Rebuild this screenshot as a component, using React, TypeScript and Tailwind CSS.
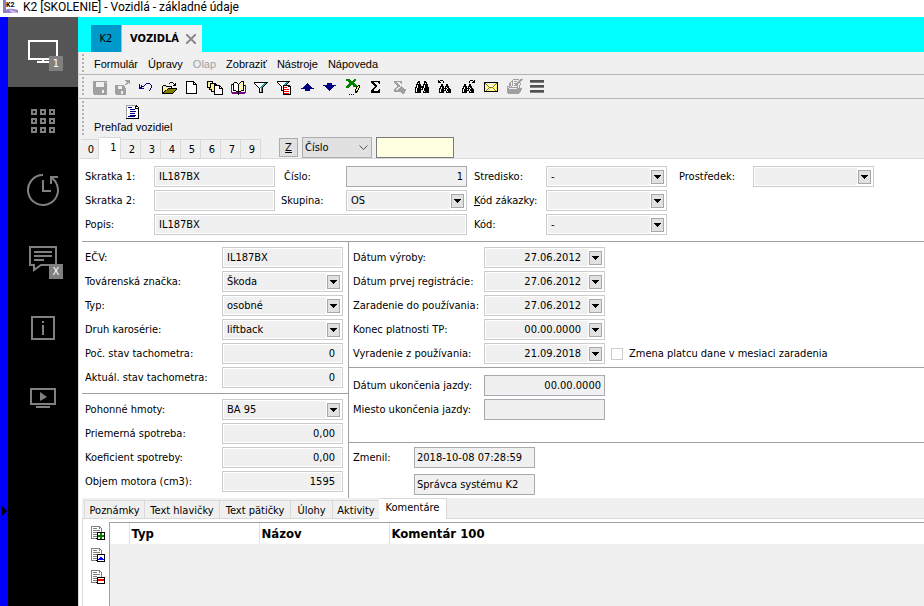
import { useState, type ReactNode } from 'react';
import clsx from 'clsx';

const PALETTE: Record<string, string> = {
  k: '#000000',
  g: '#a0a0a0',
  d: '#505050',
  s: '#808080',
  n: '#000080',
  b: '#0000ff',
  y: '#fff27a',
  o: '#808000',
  w: '#ffffff',
  t: '#2fa3a3',
  p: '#800080',
  r: '#ff0000',
  G: '#008000',
};

// Icons are stored as rows of palette letters, first row drawn at `top`
type Bitmap = { top: number; rows: string[] };

const ICONS: Record<string, Bitmap> = {
  save: {
    top: 2,
    rows: [
      '.gggggggggggggg', '.ggg........g.g', '.ggg........ggg', '.ggg........ggg', '.ggg........ggg',
      '.ggg........ggg', '.gggggggggggggg', '.gggggggggggggg', '.gggggggggggggg', '.ggggggggg..ggg',
      '.ggggggggg..ggg', '.ggggggggg..ggg', '.gggggggggggggg', '..ggggggggggggg',
    ],
  },
  saveAs: {
    top: 1,
    rows: [
      '..........ggggg', '...........gggg', '............ggg', '...........gg.g', '..........gg', 'ggggggggg',
      'ggg....ggg', 'ggg....ggg..', 'ggg....gggg', 'ggggggggggg', 'ggggggggggg', 'gggggg..ggg', 'gggggg..ggg',
      'gggggg..ggg', '.gggggggggg',
    ],
  },
  undo: {
    top: 4,
    rows: ['........nnnn', '.n.....n....n', '.n.n..n......n', '.n.nnn.......n', '.nnn.........n', '.nnnnn......n', '............n', '...........n'],
  },
  open: {
    top: 3,
    rows: [
      '.........kkk', '........k...k.k', '.............kk', '..kkk.......kkk', '.kyyykkkkkk', '.kywywywywk',
      '.kyywyykkkkkkkkk', '.kywyykooooooook', '.kyykoooooooook', '.kykoooooooook', '.kkoooooooook', '.kkkkkkkkkkk',
    ],
  },
  blank: {
    top: 2,
    rows: [
      '..kkkkkkkk', '..kwwwwwwkk', '..kwwwwwwkwk', '..kwwwwwwkkkk', '..kwwwwwwwwwk', '..kwwwwwwwwwk', '..kwwwwwwwwwk',
      '..kwwwwwwwwwk', '..kwwwwwwwwwk', '..kwwwwwwwwwk', '..kwwwwwwwwwk', '..kwwwwwwwwwk', '..kkkkkkkkkkk',
    ],
  },
  copies: {
    top: 2,
    rows: [
      'kkkkkk', 'kyywyk', 'kywkkkkkk', 'kyykyywkkk', 'kwykywykkkkkk', 'kyykyyykwwwwkk', 'kkkkwyykwwwwkwk',
      '..kyyyykwwwwkkkk', '..kkkyykwwwwwwwk', '....kwykwwwwwwwk', '....kkkkwwwwwwwk', '.......kwwwwwwwk',
      '.......kwwwwwwwk', '.......kkkkkkkkk',
    ],
  },
  book: {
    top: 2,
    rows: [
      '...........kkk', '....kkk...kwyk', '...kwwwk.kwywk', '.pkkwwwwkwywyk', '.pwkwwwwkywywkkp', '.pwkwwwwkwywykwp',
      '.pwkwwwwkywywkwp', '.pwkwwwwkwywykwp', '.pwkwwwwkywywkwp', '.pwkkkwwkwykkkwp', '.pwwwwkkkkkwwwwp',
      '.pppppppkppppppp', '..ppppppkpppppp', '........k',
    ],
  },
  filter: {
    top: 3,
    rows: [
      '.kkkkkkkkkkkkkk', '.kwwwwwwwwwttk', '..kwwwwwwwttk', '...kwwwwwttk', '....kwwwttk', '.....kwttk', '......kwtk',
      '......kwtk', '......kwtk', '......kwtk', '......kkkk',
    ],
  },
  filterList: {
    top: 2,
    rows: [
      '.kkkkkkkkkkkkk', '.kwwwwwwwwttk', '..kwwwwwwttk', '...kwwwwttk', '....kwwkkkkkkk', '.....kwkwwwwkkk', '.....kwkrrrwwwk',
      '.....kwkwwwwwwk', '.....kwkrrrrrwk', '.....kkkwwwwwwk', '.......krrrrrwk', '.......kwwwwwwk', '.......krrrrrwk',
      '.......kkkkkkkk',
    ],
  },
  up: {
    top: 4,
    rows: ['........n', '.......nnn', '......nnnnn', '.....nnnnnnn', '....nnnnnnnnn', '..nnnnnnnnnnnnn', '......nnnnn', '......nnnnn'],
  },
  down: {
    top: 4,
    rows: ['.....nnnnn', '.....nnnnn', '.nnnnnnnnnnnnn', '...nnnnnnnnn', '....nnnnnnn', '.....nnnnn', '......nnn', '.......n'],
  },
  excel: {
    top: 0,
    rows: [
      '.GGGG....GG', '.GGGGG..GGG', '...GGGGGGG', '....GGGGG', '....GGGGGG', '...GGGGGGGG', '..GGGG..GGGG.kk',
      '.GGGG...GGGGkyk', '.GGG.......kyyk', '...........kyk', '..........kyyk', '..........kyk', '..........kkk',
      '..........kk', '', '....k.k.k',
    ],
  },
  sum: {
    top: 2,
    rows: [
      '...kkkkkkkkk', '...kkk....kk', '....kkk....k', '.....kkk', '......kkk', '.......kk', '......kk', '.....kk',
      '....kk.....k', '...kkk....kk', '...kkkkkkkkk', '...kkkkkkkkk',
    ],
  },
  sumNext: {
    top: 2,
    rows: [
      '...gggggggg', '...ggg...gg', '....ggg...g', '.....ggg', '......ggg', '......ggg.g', '.....gg..ggg', '....gg..ggggg',
      '...gg..gggggggg', '...gggggggggggg', '...ggggggggggg', '..........gggg', '...........gg',
    ],
  },
  find: {
    top: 2,
    rows: [
      '....kk....kk', '...kkk....kkk', '...kwk....kwk', '..kkkkk..kkkkk', '..kwkkk..kwkkk', '..kwkkkkkkwkkk', '.kkwkkkkkkwkkkk',
      '.kwkkkkwkwkkkkk', '.kwkkkkkkwkkkkk', '.kwkkkk..wkkkkk', '.kwkkkk..kwkkkk', '.kkkkkk..kkkkkk',
    ],
  },
  findPrev: {
    top: 1,
    rows: [
      '.k.kkk', '.kk...k', '.kkk..k', '', '....kk...kk', '....kk...kk', '...kkkk.kkkk', '...kwkk.kwkk', '..kkwkkkkkwkk',
      '..kwkkkwkwkkkk', '..kwkkkkkwkkkk', '..kwkkk..kwkkk', '..kkkkk..kkkkk',
    ],
  },
  findNext: {
    top: 1,
    rows: [
      '..........kkk.k', '.........k...kk', '.........k..kkk', '', '....kk...kk', '....kk...kk', '...kkkk.kkkk',
      '...kwkk.kwkk', '..kkwkkkkkwkk', '..kwkkkwkwkkkk', '..kwkkkkkwkkkk', '..kwkkk..kwkkk', '..kkkkk..kkkkk',
    ],
  },
  mail: {
    top: 3,
    rows: [
      '.kkkkkkkkkkkkkk', '.kowywywywywyok', '.kyowywywywyoyk', '.kwyowywywyowyk', '.kywyoywywoywyk', '.kwywyoooowywyk',
      '.kywyowywyoywyk', '.kwyowywywyowyk', '.kyowywywywyoyk', '.kkkkkkkkkkkkkk',
    ],
  },
  notes: {
    top: 0,
    rows: [
      '.......gggggg.ggg', '......g......ggg', '.....gg.ggg.ggg', '....g.g....ggg', '...gg.g.ggggg.g', '...gg.g..ggg..g',
      '...gg.g.gggg.g', '.ggg.g.....g.g', '.g.ggggggggg.g', '.gg........ggggg', '.ggggggggggggggg', '.gggggggggggggg',
      '.gggggggggggggg', '.ggggggggggggg', '..ggggggggggg',
    ],
  },
  menu: {
    top: 1,
    rows: [
      '.dddddddddddddd', '.dddddddddddddd', '.ssssssssssssss', '', '', '.dddddddddddddd', '.dddddddddddddd', '.ssssssssssssss', '', '',
      '.dddddddddddddd', '.dddddddddddddd', '.ssssssssssssss',
    ],
  },
  overview: {
    top: 1,
    rows: [
      '.ggggggggggk', '.gwwwwwwwwkkk', '.gwnnnnwwwkwwk', '.gwwwwwwwwkkkk', '.gwwwnnnnnwwwk', '.gwwwwwwwwwwwk',
      '.gwwwnnnnnnwwk', '.gwwwwwwwwwwwk', '.gwwwnnnnnwwwk', '.gwwwwwwwwwwwk', '.gwwwnnnnnnwwk', '.gwnnnnnnnwwwk',
      '.gwwwwwwwwwwwk', '.kkkkkkkkkkkkk',
    ],
  },
  add: {
    top: 1,
    rows: [
      '.sssssssss', '.swwwwwwwss', '.swsssswwsws', '.swwwwwwwwws', '.swsssssssws', '.swwwwwwwwws', '.swsssskkkkkkkk', '.swwwwwkwwGGwwk',
      '.swsssskwwGGwwk', '.swwwwwkGGGGGGk', '.swsssskGGGGGGk', '.swwwwwkwwGGwwk', '.ssssskkwwGGwwk', '.......kkkkkkkk',
    ],
  },
  edit: {
    top: 1,
    rows: [
      '.sssssssss', '.swwwwwwwss', '.swsssswwsws', '.swwwwwwwwws', '.swsssssssws', '.swwwwwwwwws', '.swsssskkkkkkkk', '.swwwwwkwwwwwwk',
      '.swsssskwwwwwwk', '.swwwwwkwwbbwwk', '.swsssskwbbbbwk', '.swwwwwkbbbbbbk', '.ssssskkwwwwwwk', '.......kkkkkkkk',
    ],
  },
  remove: {
    top: 1,
    rows: [
      '.sssssssss', '.swwwwwwwss', '.swsssswwsws', '.swwwwwwwwws', '.swsssssssws', '.swwwwwwwwws', '.swsssswwwws', '.swwwwwkkkkkkkk',
      '.swsssskwwwwwwk', '.swwwwwkrrrrrrk', '.swsssskrrrrrrk', '.swwwwwkwwwwwwk', '.ssssskkwwwwwwk', '.......kkkkkkkk',
    ],
  },
};

const TOOLS = [
  ['save', 'Uložiť'],
  ['saveAs', 'Uložiť ako'],
  ['undo', 'Späť'],
  ['open', 'Otvoriť'],
  ['blank', 'Nový'],
  ['copies', 'Kopírovať'],
  ['book', 'Kniha'],
  ['filter', 'Filter'],
  ['filterList', 'Zoznam filtrov'],
  ['up', 'Predchádzajúci'],
  ['down', 'Nasledujúci'],
  ['excel', 'Excel'],
  ['sum', 'Súčet'],
  ['sumNext', 'Ďalší súčet'],
  ['find', 'Hľadať'],
  ['findPrev', 'Hľadať späť'],
  ['findNext', 'Hľadať ďalej'],
  ['mail', 'Pošta'],
  ['notes', 'Poznámky'],
  ['menu', 'Ponuka'],
] as const;

const MENU = ['Formulár', 'Úpravy', 'Olap', 'Zobraziť', 'Nástroje', 'Nápoveda'];
const PAGES = ['0', '1', '2', '3', '4', '5', '6', '7', '9'];

const DETAIL_TABS = [
  { name: 'Poznámky', width: 'w-[60px]' },
  { name: 'Text hlavičky', width: 'w-[75px]' },
  { name: 'Text pätičky', width: 'w-[71px]' },
  { name: 'Úlohy', width: 'w-[42px]' },
  { name: 'Aktivity', width: 'w-[47px]' },
  { name: 'Komentáre', width: 'w-[68px]' },
];

function PixelIcon({ name }: { name: string }) {
  const { top, rows } = ICONS[name];
  return (
    <svg width="17" height="17" viewBox="0 0 17 17" shapeRendering="crispEdges" aria-hidden="true">
      {rows.flatMap((row, y) =>
        [...row.matchAll(/([^.])\1*/g)].map((run) => (
          <rect key={`${run.index}-${y}`} x={run.index} y={top + y} width={run[0].length} height={1} fill={PALETTE[run[1]]} />
        )),
      )}
    </svg>
  );
}

function Grip() {
  return <div className="w-0.5 self-stretch my-0.5 ml-[3px] bg-[repeating-linear-gradient(to_bottom,#b0b0b0_0_2px,transparent_2px_4px)]" />;
}

function ArrowBox() {
  return (
    <span className="flex h-[14px] w-[13px] items-center justify-center border border-[#a8a8a8] bg-[#e1e1e1]">
      <svg width="7" height="4" viewBox="0 0 7 4" shapeRendering="crispEdges" aria-hidden="true">
        <path d="M0 0h7v1h-1v1h-1v1h-1v1h-1v-1h-1v-1h-1v-1h-1z" />
      </svg>
    </span>
  );
}

type FieldProps = {
  id: string;
  label: ReactNode;
  value?: string;
  align?: 'left' | 'right';
  kind?: 'soft' | 'hard';
  labelClass?: string;
  className?: string;
};

function TextField({ id, label, value = '', align = 'left', kind = 'soft', labelClass, className }: FieldProps) {
  return (
    <>
      <label htmlFor={id} className={clsx('whitespace-nowrap', labelClass)}>{label}</label>
      <input
        id={id}
        defaultValue={value}
        className={clsx(
          'h-[21px] w-full min-w-0 border bg-[#f0f0f0] outline-none',
          kind === 'soft' ? 'border-[#cccccc] pl-1 pr-[7px] shadow-[inset_0_0_0_1px_#fff]' : 'border-[#a9a9b0] pl-0.5 pr-[3px]',
          align === 'right' && 'text-right',
          className,
        )}
      />
    </>
  );
}

function SelectField({ id, label, value = '', labelClass }: FieldProps) {
  return (
    <>
      <label htmlFor={id} className={clsx('whitespace-nowrap', labelClass)}>{label}</label>
      <div className="relative h-[21px]">
        <select
          id={id}
          className="block h-[21px] w-full appearance-none border border-[#cccccc] bg-[#f0f0f0] pl-1 shadow-[inset_0_0_0_1px_#fff] outline-none"
        >
          <option>{value}</option>
        </select>
        <span className="pointer-events-none absolute inset-y-px right-px flex w-4 items-center bg-white pl-px">
          <ArrowBox />
        </span>
      </div>
    </>
  );
}

function DateField({ id, label, value }: FieldProps) {
  return (
    <>
      <label htmlFor={id} className="whitespace-nowrap">{label}</label>
      <div className="flex h-[21px] items-center border border-[#cccccc] bg-white p-px">
        <input id={id} defaultValue={value} className="h-[17px] w-0 flex-1 bg-[#f0f0f0] pr-[7px] text-right outline-none" />
        <button type="button" aria-label="Kalendár" className="ml-px mr-px">
          <ArrowBox />
        </button>
      </div>
    </>
  );
}

function NavItem({ label, active, badge, children }: { label: string; active?: boolean; badge?: string; children: ReactNode }) {
  return (
    <button
      type="button"
      aria-label={label}
      className={clsx('flex w-full items-center justify-center', active ? 'h-[70px] bg-[#555555] text-white' : 'h-[69px] text-[#808080]')}
    >
      <span className="relative">
        <svg width="34" height="34" viewBox="0 0 34 34" fill="none" stroke="currentColor" strokeWidth="2">
          {children}
        </svg>
        {badge && (
          <span className="absolute -bottom-0.5 -right-[3px] flex h-[15px] w-[14px] items-center justify-center bg-[#808080] text-[11px] leading-none text-white">
            {badge}
          </span>
        )}
      </span>
    </button>
  );
}

function Sidebar() {
  return (
    <nav className="w-[70px] shrink-0 bg-black">
      <NavItem label="Plocha" active badge="1">
        <path d="M3 6h28v18h-28zM17 24v3M11 27h12" />
      </NavItem>
      <NavItem label="Moduly">
        {[5, 14, 23].map((y) => [6, 15, 24].map((x) => <rect key={`${x}-${y}`} x={x} y={y} width="4" height="4" />))}
      </NavItem>
      <NavItem label="História">
        <path d="M17 1A15 15 0 1 0 29 7" />
        <path d="M17 6v11h8M32 3h-7v7M25 3l5 5" />
      </NavItem>
      <NavItem label="Správy" badge="X">
        <path d="M4 4h26v18h-15l-7 5v-5h-4z" />
        <path d="M8 9h18M8 13h18M8 17h10" />
      </NavItem>
      <NavItem label="Informácie">
        <path d="M6 5h22v22h-22zM17 9v2M17 13v10" />
      </NavItem>
      <NavItem label="Prezentácia">
        <path d="M5 8h24v15h-24zM10 26h14" />
        <path d="M14 11v9l7-4z" fill="currentColor" stroke="none" />
      </NavItem>
    </nav>
  );
}

function TopForm() {
  return (
    <section className="ml-[3px] border-b border-[#a0a0a0] pb-1.5 pl-[3px] pt-[7px]">
      <div className="grid grid-cols-[69px_121px_71px_121px_79px_121px_86px_121px] items-center gap-y-[3px]">
        <TextField id="skratka1" label="Skratka 1:" value="IL187BX" />
        <TextField id="cislo" label="Číslo:" value="1" align="right" kind="hard" labelClass="pl-[9px]" />
        <SelectField id="stredisko" label="Stredisko:" value="-" labelClass="pl-[7px]" />
        <SelectField id="prostredek" label="Prostředek:" labelClass="pl-3" />

        <TextField id="skratka2" label="Skratka 2:" />
        <SelectField id="skupina" label="Skupina:" value="OS" labelClass="pl-1.5" />
        <SelectField id="zakazka" label={<><u>K</u>ód zákazky:</>} labelClass="pl-[7px]" />
        <span className="col-span-2" />

        <TextField id="popis" label="Popis:" value="IL187BX" className="col-span-3" />
        <SelectField id="kod" label="Kód:" value="-" labelClass="pl-[7px]" />
      </div>
    </section>
  );
}

function VehicleForm() {
  return (
    <div className="ml-[3px] flex">
      <div className="w-[267px] shrink-0 border-r border-[#a0a0a0]">
        <div className="grid grid-cols-[137px_121px] items-center gap-y-[3px] border-b border-[#a0a0a0] py-[5px] pl-[3px]">
          <TextField id="ecv" label="EČV:" value="IL187BX" />
          <SelectField id="znacka" label="Továrenská značka:" value="Škoda" />
          <SelectField id="typ" label="Typ:" value="osobné" />
          <SelectField id="karoseria" label="Druh karosérie:" value="liftback" />
          <TextField id="pocTacho" label="Poč. stav tachometra:" value="0" align="right" />
          <TextField id="aktTacho" label="Aktuál. stav tachometra:" value="0" align="right" />
        </div>
        <div className="grid grid-cols-[137px_121px] items-center gap-y-[3px] pb-1.5 pl-[3px] pt-[5px]">
          <SelectField id="palivo" label="Pohonné hmoty:" value="BA 95" />
          <TextField id="spotreba" label="Priemerná spotreba:" value="0,00" align="right" />
          <TextField id="koef" label="Koeficient spotreby:" value="0,00" align="right" />
          <TextField id="objem" label="Objem motora (cm3):" value="1595" align="right" />
        </div>
      </div>

      <div className="min-w-0 flex-1">
        <div className="flex items-end border-b border-[#a0a0a0] pb-[3px] pl-1 pt-[5px]">
          <div className="grid grid-cols-[131px_121px] items-center gap-y-[3px]">
            <DateField id="vyroba" label="Dátum výroby:" value="27.06.2012" />
            <DateField id="registracia" label="Dátum prvej registrácie:" value="27.06.2012" />
            <DateField id="zaradenie" label="Zaradenie do používania:" value="27.06.2012" />
            <DateField id="platnost" label="Konec platnosti TP:" value="00.00.0000" />
            <DateField id="vyradenie" label="Vyradenie z používania:" value="21.09.2018" />
          </div>
          <label className="ml-1.5 flex h-[21px] items-center gap-1.5 whitespace-nowrap">
            <input type="checkbox" className="size-3 appearance-none border border-[#cccccc] bg-white checked:bg-[#808080]" />
            Zmena platcu dane v mesiaci zaradenia
          </label>
        </div>
        <div className="grid grid-cols-[131px_121px] items-center gap-y-[3px] border-b border-[#a0a0a0] pb-[22px] pl-1 pt-[7px]">
          <TextField id="ukoncenie" label="Dátum ukončenia jazdy:" value="00.00.0000" align="right" kind="hard" />
          <TextField id="miesto" label="Miesto ukončenia jazdy:" kind="hard" />
        </div>
        <div className="grid grid-cols-[61px_121px] items-center gap-y-1.5 pl-1 pt-1">
          <TextField id="zmenil" label="Zmenil:" value="2018-10-08 07:28:59" kind="hard" />
          <input aria-label="Používateľ" defaultValue="Správca systému K2" className="col-start-2 h-[21px] w-full border border-[#a9a9b0] bg-[#f0f0f0] px-0.5 outline-none" />
        </div>
      </div>
    </div>
  );
}

function DetailPanel() {
  const [tab, setTab] = useState('Komentáre');

  return (
    <section className="ml-[3px] flex flex-1 flex-col">
      <div role="tablist" className="flex h-[21px] items-end border-b border-[#d9d9d9] bg-[#f0f0f0] pl-0.5">
        {DETAIL_TABS.map(({ name, width }) => (
          <button
            key={name}
            type="button"
            role="tab"
            aria-selected={tab === name}
            onClick={() => setTab(name)}
            className={clsx(
              'whitespace-nowrap border-[#d9d9d9]',
              width,
              tab === name ? '-mb-px h-[21px] border-r border-t bg-white pb-0.5' : 'h-[18px] border-l border-t pt-0.5',
            )}
          >
            {name}
          </button>
        ))}
      </div>
      <div className="flex flex-1 border-l border-[#d9d9d9]">
        <div className="flex w-[26px] shrink-0 flex-col items-end gap-[5px] pr-0.5 pt-1.5">
          <button type="button" aria-label="Pridať"><PixelIcon name="add" /></button>
          <button type="button" aria-label="Upraviť"><PixelIcon name="edit" /></button>
          <button type="button" aria-label="Odstrániť"><PixelIcon name="remove" /></button>
        </div>
        <div className="mt-[3px] flex-1 border-l border-t border-[#a0a0a8] bg-[#f0f0f0]">
          <table className="w-full table-fixed text-left text-[13px] leading-[21px]">
            <thead>
              <tr className="bg-white">
                <th className="h-[21px] w-[19px] p-0" />
                <th className="w-[130px] border-l border-[#e0e0e0] p-0 pl-0.5">Typ</th>
                <th className="w-[130px] border-l border-[#e0e0e0] p-0 pl-0.5">Názov</th>
                <th className="border-l border-[#e0e0e0] p-0 pl-0.5">Komentár 100</th>
              </tr>
            </thead>
          </table>
        </div>
      </div>
    </section>
  );
}

export default function App() {
  const [page, setPage] = useState('1');

  return (
    <div className="flex min-h-screen flex-col bg-white font-['DejaVu_Sans_Condensed','DejaVu_Sans',sans-serif] text-[11px] leading-[14px] text-black">
      <header className="flex h-[17px] items-start pl-[3px] font-['Roboto',sans-serif] text-[12px] leading-[14px]">
        <svg width="15" height="13" viewBox="0 0 15 13" className="mr-[5px] shrink-0" aria-hidden="true">
          <path d="M0 0h3v13h-3z" fill="#8f7fc0" />
          <path d="M3 10c3-2 6-1 12 0v3H3z" fill="#9a7fd0" />
          <path d="M6 9l6 2 3 2h-7z" fill="#c9b6ea" />
          <text x="3" y="7" fontSize="7" fontWeight="700" fill="#000">K2</text>
        </svg>
        K2 [SKOLENIE] - Vozidlá - základné údaje
      </header>

      <div className="flex flex-1">
        <div className="w-2 shrink-0 bg-[#0000ff] pl-0.5 pt-[489px]">
          <svg width="5" height="10" viewBox="0 0 5 10" aria-hidden="true">
            <path d="M0 0l5 5-5 5z" />
          </svg>
        </div>
        <Sidebar />

        <main className="flex min-w-0 flex-1 flex-col">
          <div className="flex h-[35px] items-end gap-px bg-[#00ffff] pl-[13px]">
            <button type="button" className="h-[27px] w-[30px] bg-[#0099cc]">K2</button>
            <div className="flex h-[27px] w-20 items-center justify-between bg-[#f0f0f0] pl-2 pr-1.5">
              <span className="font-bold">VOZIDLÁ</span>
              <button type="button" aria-label="Zavrieť">
                <svg width="10" height="10" viewBox="0 0 10 10" stroke="#8a8a8a" strokeWidth="2">
                  <path d="M0 0l10 10M10 0l-10 10" />
                </svg>
              </button>
            </div>
          </div>

          <div className="flex flex-1 flex-col border-l border-[#d9d9d9]">
            <div className="bg-[#f0f0f0]">
              <div className="flex h-[23px] items-center border-b border-[#b4b4b4] font-['Liberation_Sans',Arial,sans-serif]">
                <Grip />
                <div className="flex gap-[10px] pl-[10px] pt-0.5">
                  {MENU.map((item) => (
                    <button key={item} type="button" disabled={item === 'Olap'} className="disabled:text-[#a0a0a0]">
                      {item}
                    </button>
                  ))}
                </div>
              </div>

              <div className="flex h-6 items-center border-b border-[#b4b4b4]">
                <Grip />
                <div className="flex pl-[5px] pt-px">
                  {TOOLS.map(([name, title]) => (
                    <button key={name} type="button" title={title} className="flex w-[23px] justify-center">
                      <PixelIcon name={name} />
                    </button>
                  ))}
                </div>
              </div>

              <div className="flex h-[38px] items-start">
                <Grip />
                <button type="button" className="ml-[10px] flex flex-col items-center pt-[5px] font-['Liberation_Sans',Arial,sans-serif] leading-[13px]">
                  <PixelIcon name="overview" />
                  Prehľad vozidiel
                </button>
              </div>

              <div className="flex h-[22px] items-end border-b border-[#d9d9d9]">
                <div role="tablist" className="flex items-end pl-0.5">
                  {PAGES.map((p) => (
                    <button
                      key={p}
                      type="button"
                      role="tab"
                      aria-selected={page === p}
                      onClick={() => setPage(p)}
                      className={clsx(
                        'border-r border-t border-[#d9d9d9]',
                        page === p ? '-mb-px h-[22px] w-[22px] bg-white pb-0.5 pl-2' : 'h-[19px] w-5 pl-[3px] pt-0.5 first:w-[18px]',
                      )}
                    >
                      {p}
                    </button>
                  ))}
                </div>
                <button type="button" className="mb-px ml-[18px] h-[19px] w-[19px] border border-[#adadad] bg-[#e1e1e1] underline">Z</button>
                <div className="relative ml-1">
                  <select aria-label="Triediť podľa" className="block h-[21px] w-[70px] appearance-none border border-[#adadad] bg-[#e1e1e1] pl-0.5">
                    <option>Číslo</option>
                  </select>
                  <svg width="9" height="6" viewBox="0 0 9 6" fill="none" stroke="#505050" className="pointer-events-none absolute right-1 top-2">
                    <path d="M.5.5l4 4 4-4" />
                  </svg>
                </div>
                <input aria-label="Hľadať" className="ml-1 h-[21px] w-[78px] border border-[#7a7a7a] bg-[#ffffe1] px-1" />
              </div>
            </div>

            <TopForm />
            <VehicleForm />
            <DetailPanel />
          </div>
        </main>
      </div>
    </div>
  );
}
